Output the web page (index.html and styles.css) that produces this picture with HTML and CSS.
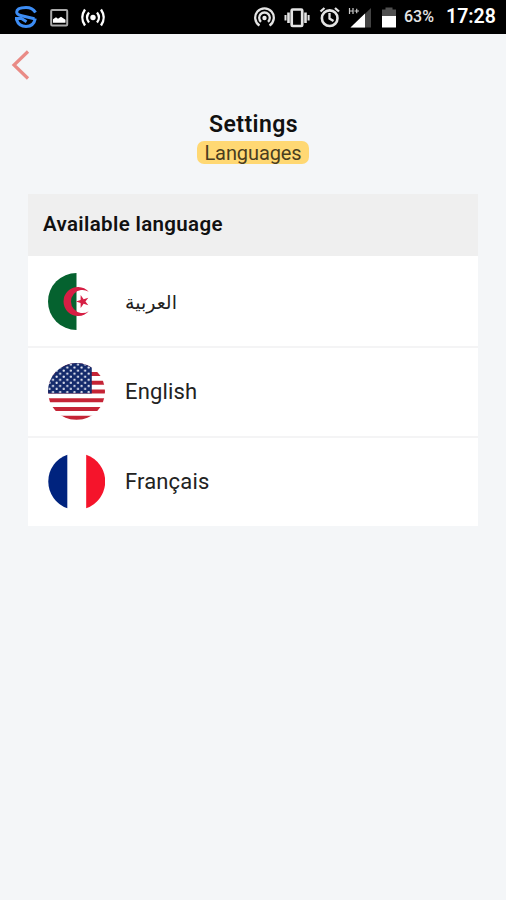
FILE: index.html
```html
<!DOCTYPE html>
<html lang="en">
<head>
<meta charset="utf-8">
<title>Settings</title>
<link rel="stylesheet" href="styles.css">
</head>
<body>
<header class="status">
  <svg class="status-left" width="110" height="34" viewBox="0 0 110 34" fill="none">
    <g stroke="#3d8df5" stroke-width="3">
      <path d="M35.500 12.500C33.500 9 30 7.500 26 7.500c-5 0-9.300 1.500-9.300 4.500 0 2.300 2.300 3.200 5 3.800l12.800 2.900"/>
      <path d="M15 18.500h6.500l5 3.200"/>
      <path d="M16.500 19.500c1.500 4.500 5 7 9.500 7s8.300-2.500 9.300-8"/>
    </g>
    <rect x="51.200" y="10" width="16" height="15.500" rx="1" stroke="#aaa" stroke-width="2"/>
    <path d="M53 22.800v-3.500l3-2 2 1.500 3-2 4.500 3v3z" fill="#fff"/>
    <g stroke="#fff" stroke-width="2.300">
      <circle cx="93" cy="17.500" r="2.700" fill="#fff" stroke="none"/>
      <path d="M89 12.500q-4 5 0 10M97 12.500q4 5 0 10M85 9.500q-5.500 8 0 16M101 9.500q5.500 8 0 16"/>
    </g>
  </svg>
  <div class="status-right">
    <svg width="146" height="34" viewBox="252 0 146 34" fill="none">
      <g stroke="#e4e4e4" stroke-width="2.300">
        <path d="M259.500 25.500a9.300 9.300 0 1 1 10 0M261 21.800a5.300 5.300 0 1 1 7 0"/>
        <circle cx="264.500" cy="18" r="2.200" fill="#eee" stroke="none"/>
        <rect x="291.700" y="9.500" width="10.500" height="16.500" rx="1" stroke-width="2.700"/>
        <path d="M288.500 12.500v10.500M305.500 12.500v10.500" stroke-width="2.600"/>
        <path d="M285.500 15v5.500M308.600 15v5.500" stroke-width="2"/>
        <circle cx="329.700" cy="18.200" r="7.800" stroke-width="2.600"/>
        <path d="M329.500 13v5.500l4 2.500M320.500 11.500l4-3.500M339 11.500l-4-3.500"/>
      </g>
      <path d="M350.500 27.500L371 8v19.500z" fill="#444"/>
      <path d="M350.500 27.500L365 13.500v14z" fill="#fff"/>
      <path d="M349.500 8v6M353 8v6M349.500 11h3.500M354.500 11h4.500M356.700 8.800v4.400" stroke="#ccc" stroke-width="1.200"/>
      <path d="M382 9.500h3.500V7.500h7v2h3.500V16h-14z" fill="#505050"/>
      <path d="M382 16h14v11.500h-14z" fill="#fff"/>
    </svg>
    <span class="battery">63%</span>
    <span class="clock">17:28</span>
  </div>
</header>
<main>
  <svg class="back" width="20" height="30" viewBox="0 0 20 30" fill="none">
    <path d="M18 1.500L4 15l14 13.500" stroke="#e98b86" stroke-width="3.200"/>
  </svg>
  <div class="heading">
    <h1>Settings</h1>
    <span class="tag">Languages</span>
  </div>
  <section class="list">
    <h2>Available language</h2>
    <div class="row">
      <svg class="flag" viewBox="0 0 56 56">
        <path d="M28 0a28 28 0 0 0 0 56z" fill="#05622f"/>
        <path d="M40 18.500a14.200 14.200 0 1 0 0 19a11.300 11.300 0 1 1 0-19z" fill="#d61f44"/>
        <path d="M27.500 28l4.500-1.400.1-4.900 2.900 4 4.600-1.500L36.800 28l2.800 3.800-4.600-1.500-2.900 4-.1-4.900z" fill="#d61f44"/>
      </svg>
      <span class="arabic" lang="ar" dir="rtl">العربية</span>
    </div>
    <div class="row">
      <svg class="flag" viewBox="0 0 56 56">
        <defs>
          <clipPath id="disc"><circle cx="28" cy="28" r="28"/></clipPath>
          <pattern id="stars" width="7" height="6" patternUnits="userSpaceOnUse">
            <circle cx="1.500" cy="1.500" r="1.100" fill="#e8eaf4"/>
            <circle cx="5" cy="4.500" r="1.100" fill="#e8eaf4"/>
          </pattern>
        </defs>
        <g clip-path="url(#disc)">
          <path d="M0 2.150h56M0 10.770h56M0 19.380h56M0 28h56M0 36.600h56M0 45.200h56M0 53.850h56" stroke="#c52436" stroke-width="4"/>
          <path d="M0 0h43v30H0z" fill="#142a6b"/>
          <path d="M0 0h42v30H0z" fill="url(#stars)"/>
        </g>
      </svg>
      <span>English</span>
    </div>
    <div class="row">
      <svg class="flag" viewBox="0 0 56 56">
        <path d="M19 1.800a27.700 27.700 0 0 0 0 52.400z" fill="#00237e"/>
        <path d="M37.500 1.800a27.700 27.700 0 0 1 0 52.400z" fill="#f5142b"/>
      </svg>
      <span>Français</span>
    </div>
  </section>
</main>
</body>
</html>
```
FILE: styles.css
```css
* { box-sizing: border-box; }
body {
  margin: 0;
  min-height: 900px;
  background: #f4f6f8;
  color: #111;
  font-family: Roboto, "Noto Sans", "DejaVu Sans", sans-serif;
}
.status {
  display: flex;
  justify-content: space-between;
  height: 34px;
  background: #000;
  color: #fff;
}
.status-right { display: flex; width: 254px; }
.status-right svg { flex: none; }
.battery {
  width: 43px;
  padding-left: 6px;
  font-size: 16px;
  font-weight: 500;
  line-height: 33px;
  color: #e6e6e6;
}
.clock {
  padding-left: 5px;
  font-size: 19.5px;
  font-weight: 600;
  line-height: 33px;
}
main { padding: 16px 28px 0; }
.back { display: block; margin-left: -18px; }
.heading {
  display: flex;
  flex-direction: column;
  align-items: center;
  padding-top: 29px;
}
h1 {
  margin: 0;
  padding-left: 1px;
  font-size: 23px;
  font-weight: 600;
  line-height: 32px;
  letter-spacing: 0.4px;
}
.tag {
  width: 112px;
  height: 23px;
  border-radius: 7px;
  background: #ffd873;
  color: #4a3d20;
  font-size: 20px;
  line-height: 24px;
  letter-spacing: -0.1px;
  text-align: center;
}
.list { width: 450px; margin-top: 30px; background: #fff; }
h2 {
  height: 62px;
  margin: 0;
  padding-left: 15px;
  background: #efefef;
  font-size: 20.5px;
  font-weight: 600;
  line-height: 60px;
  letter-spacing: 0.35px;
}
.row {
  display: flex;
  align-items: center;
  height: 90px;
  padding-left: 20px;
  color: #222;
  font-size: 22px;
  letter-spacing: 0.15px;
}
.row + .row { padding-bottom: 2px; border-top: 2px solid #f4f4f5; }
.flag { width: 57px; height: 57px; margin-right: 20px; }
.arabic { padding-top: 2px; font-size: 19px; letter-spacing: 0; }
```
